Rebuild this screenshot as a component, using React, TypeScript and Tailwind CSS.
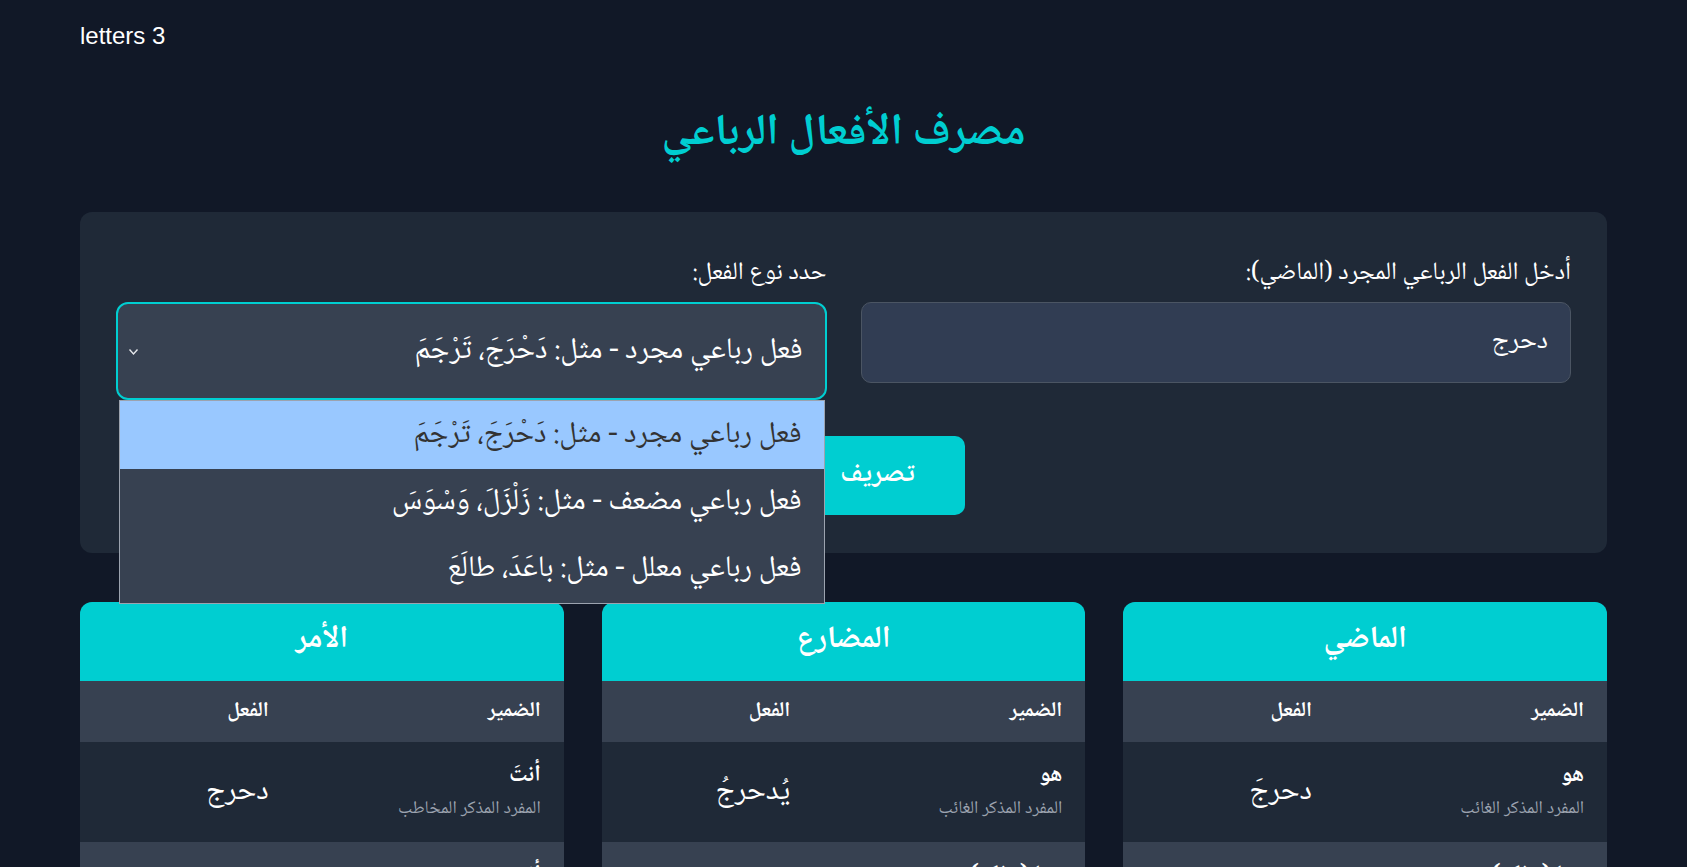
import React from "react";

const AR = "font-['Noto_Naskh_Arabic','Amiri','Scheherazade_New','DejaVu_Sans',serif]";

type Row = { p: string; d: string; v: string };

const cards: { title: string; rows: Row[] }[] = [
  {
    title: "الماضي",
    rows: [
      { p: "هو", d: "المفرد المذكر الغائب", v: "دحرجَ" },
      { p: "هما (مذكر)", d: "المثنى المذكر الغائب", v: "دحرجا" },
    ],
  },
  {
    title: "المضارع",
    rows: [
      { p: "هو", d: "المفرد المذكر الغائب", v: "يُدحرجُ" },
      { p: "هما (مذكر)", d: "المثنى المذكر الغائب", v: "يُدحرجان" },
    ],
  },
  {
    title: "الأمر",
    rows: [
      { p: "أنتَ", d: "المفرد المذكر المخاطب", v: "دحرج" },
      { p: "أنتِ", d: "المفرد المؤنث المخاطب", v: "دحرجي" },
    ],
  },
];

const options = [
  "فعل رباعي مجرد - مثل: دَحْرَجَ، تَرْجَمَ",
  "فعل رباعي مضعف - مثل: زَلْزَلَ، وَسْوَسَ",
  "فعل رباعي معلل - مثل: باعَدَ، طالَعَ",
];

function Card({ title, rows }: { title: string; rows: Row[] }) {
  return (
    <div className="rounded-t-[12px] overflow-hidden bg-[#1f2937]">
      <div className="h-[79px] bg-[#00ced1] flex items-center justify-center text-[31px] font-bold text-white">
        {title}
      </div>
      <table className="w-full table-fixed border-collapse">
        <thead>
          <tr className="bg-[#374151] h-[61px]">
            <th className="w-[295px] text-right pr-[23px] text-[21px] font-bold">الضمير</th>
            <th className="text-right text-[21px] font-bold">الفعل</th>
          </tr>
        </thead>
        <tbody>
          {rows.map((r, i) => (
            <tr key={i} className={i % 2 === 0 ? "bg-[#1f2937] h-[100px]" : "bg-[#374151] h-[100px]"}>
              <td className="pr-[23px] align-middle">
                <div className="text-[23px] font-bold leading-[34px]">{r.p}</div>
                <div className="text-[18px] text-[#9ca3af] leading-[32px]">{r.d}</div>
              </td>
              <td className="align-middle text-[30px]">{r.v}</td>
            </tr>
          ))}
        </tbody>
      </table>
    </div>
  );
}

export default function App() {
  return (
    <div className="h-[867px] overflow-hidden bg-[#111827] text-white">
      <div className="px-[80px] pt-[22px] text-[24px] leading-[28px] font-['Liberation_Sans',Arial,sans-serif]">
        letters 3
      </div>
      <div dir="rtl" className={`mx-[80px] ${AR}`}>
        <h1 className="text-center text-[#00ced1] text-[44px] font-bold leading-[60px] mt-[55px]">
          مصرف الأفعال الرباعي
        </h1>
        <div className="mt-[47px] bg-[#1f2937] rounded-[12px] px-[36px] pt-[42px] pb-[38px]">
          <div className="grid grid-cols-2 gap-[34px] items-start">
            <div>
              <label className="block text-[25px] leading-[40px] mb-[8px]">
                أدخل الفعل الرباعي المجرد (الماضي):
              </label>
              <div className="mt-[2px] h-[81px] rounded-[10px] bg-[#313d53] border border-[#4b5563] flex items-center pr-[22px] text-[27px]">
                دحرج
              </div>
            </div>
            <div>
              <label className="block text-[25px] leading-[40px] mb-[8px]">حدد نوع الفعل:</label>
              <div className="relative">
                <div className="h-[98px] rounded-[12px] bg-[#374151] border-2 border-[#00ced1] flex items-center justify-between pr-[22px] pl-[10px] text-[30px]">
                  <span>{options[0]}</span>
                  <svg width="11" height="8" viewBox="0 0 11 8" className="mt-[2px]">
                    <path d="M1.5 1.5 L5.5 6 L9.5 1.5" stroke="#e5e7eb" strokeWidth="1.4" fill="none" />
                  </svg>
                </div>
                <div className="absolute top-full right-[2px] left-[3px] z-10 bg-[#374151] border border-[#9ca3af] text-[30px]">
                  {options.map((o, i) => (
                    <div
                      key={i}
                      className={
                        i === 0
                          ? "h-[68px] flex items-center pr-[22px] bg-[#99c8ff] text-[#333333]"
                          : "h-[67px] flex items-center pr-[22px] text-white"
                      }
                    >
                      {o}
                    </div>
                  ))}
                </div>
              </div>
            </div>
          </div>
          <div className="flex justify-center mt-[36px]">
            <button className="h-[79px] w-[174px] mr-[-68px] rounded-[10px] bg-[#00ced1] text-white text-[27px] font-bold">
              تصريف
            </button>
          </div>
        </div>
        <div className="grid grid-cols-3 gap-[38px] mt-[49px]">
          {cards.map((c) => (
            <Card key={c.title} title={c.title} rows={c.rows} />
          ))}
        </div>
      </div>
    </div>
  );
}
